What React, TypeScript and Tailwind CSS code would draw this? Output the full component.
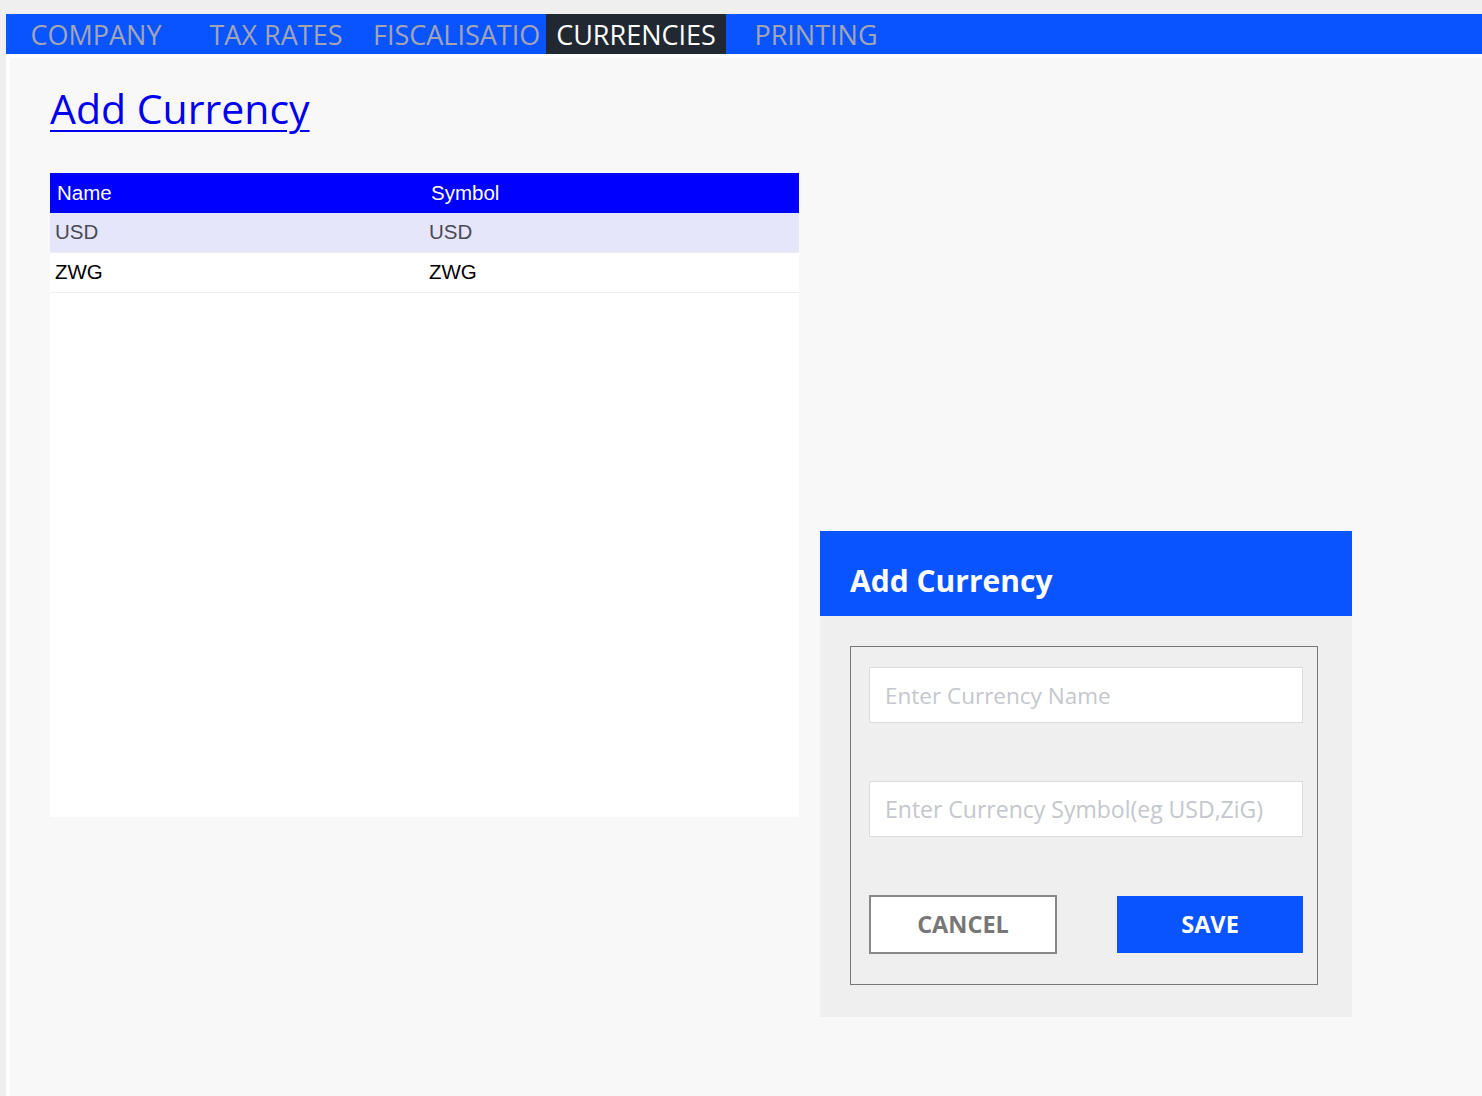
import { useState } from "react";

const TABS = ["COMPANY", "TAX RATES", "FISCALISATION", "CURRENCIES", "PRINTING"];

const CURRENCIES = [
  { name: "USD", symbol: "USD" },
  { name: "ZWG", symbol: "ZWG" },
];

export default function App() {
  const [active] = useState("CURRENCIES");

  return (
    <div
      className="min-h-[1096px] bg-[#efefef] pl-[6px] pt-[14px]"
      style={{ fontFamily: '"Open Sans", "Noto Sans", sans-serif' }}
    >
      {/* tab strip */}
      <div className="flex h-[40px] bg-[#0a54ff]">
        {TABS.map((tab) => (
          <div
            key={tab}
            className={
              "h-[40px] w-[180px] shrink-0 px-[7px] pt-[3px] " +
              (tab === active ? "bg-[#222831] text-white" : "text-[#a1a5b5]")
            }
          >
            <div className="overflow-hidden whitespace-nowrap text-center text-[27px] leading-[36px]">{tab}</div>
          </div>
        ))}
      </div>

      <div className="min-h-[1042px] border-l-4 border-t-4 border-white bg-[#f8f8f8] pl-[40px] pt-[22px]">
        <a href="#" className="text-[41px] leading-[56px] text-[#0000ee] underline decoration-[2px] underline-offset-[6px]">
          Add Currency
        </a>

        <div className="mt-[37px] flex items-start">
          {/* currency table */}
          <div className="h-[644px] w-[749px] bg-white" style={{ fontFamily: '"Liberation Sans", Arial, sans-serif' }}>
            <div className="flex h-[40px] items-center bg-[#0000ff] text-[20.5px] text-white">
              <div className="w-[374px] pl-[7px]">Name</div>
              <div className="pl-[7px]">Symbol</div>
            </div>
            {CURRENCIES.map((c, i) => (
              <div
                key={c.name}
                className={
                  "flex h-[40px] items-center border-b border-[#eceef4] text-[20.5px] " +
                  (i === 0 ? "bg-[#e6e6fa] text-[#4a4a55]" : "bg-white text-black")
                }
              >
                <div className="w-[374px] pl-[5px]">{c.name}</div>
                <div className="pl-[5px]">{c.symbol}</div>
              </div>
            ))}
          </div>

          {/* add dialog */}
          <div className="ml-[21px] mt-[358px] w-[532px] bg-[#efefef] pb-[32px]">
            <div className="flex h-[85px] items-center bg-[#0a54ff] pl-[30px] pt-[13px]">
              <h2 className="text-[30px] font-bold text-white">Add Currency</h2>
            </div>
            <div className="ml-[30px] mr-[34px] mt-[30px] border border-[#777] pb-[30px] pl-[18px] pr-[14px] pt-[20px]">
              <input
                placeholder="Enter Currency Name"
                className="h-[56px] w-full border border-[#dcdcdc] bg-white px-[15px] text-[22.5px] outline-none placeholder:text-[#c4c7cd]"
              />
              <input
                placeholder="Enter Currency Symbol(eg USD,ZiG)"
                className="mt-[58px] h-[56px] w-full border border-[#dcdcdc] bg-white px-[15px] text-[23px] outline-none placeholder:text-[#c4c7cd]"
              />
              <div className="mt-[58px] flex justify-between">
                <button className="h-[59px] w-[188px] border-2 border-[#888] bg-white text-[23.5px] font-bold text-[#777]">
                  CANCEL
                </button>
                <button className="mt-[1px] h-[57px] w-[186px] bg-[#0a54ff] text-[23.5px] font-bold text-white">
                  SAVE
                </button>
              </div>
            </div>
          </div>
        </div>
      </div>
    </div>
  );
}
